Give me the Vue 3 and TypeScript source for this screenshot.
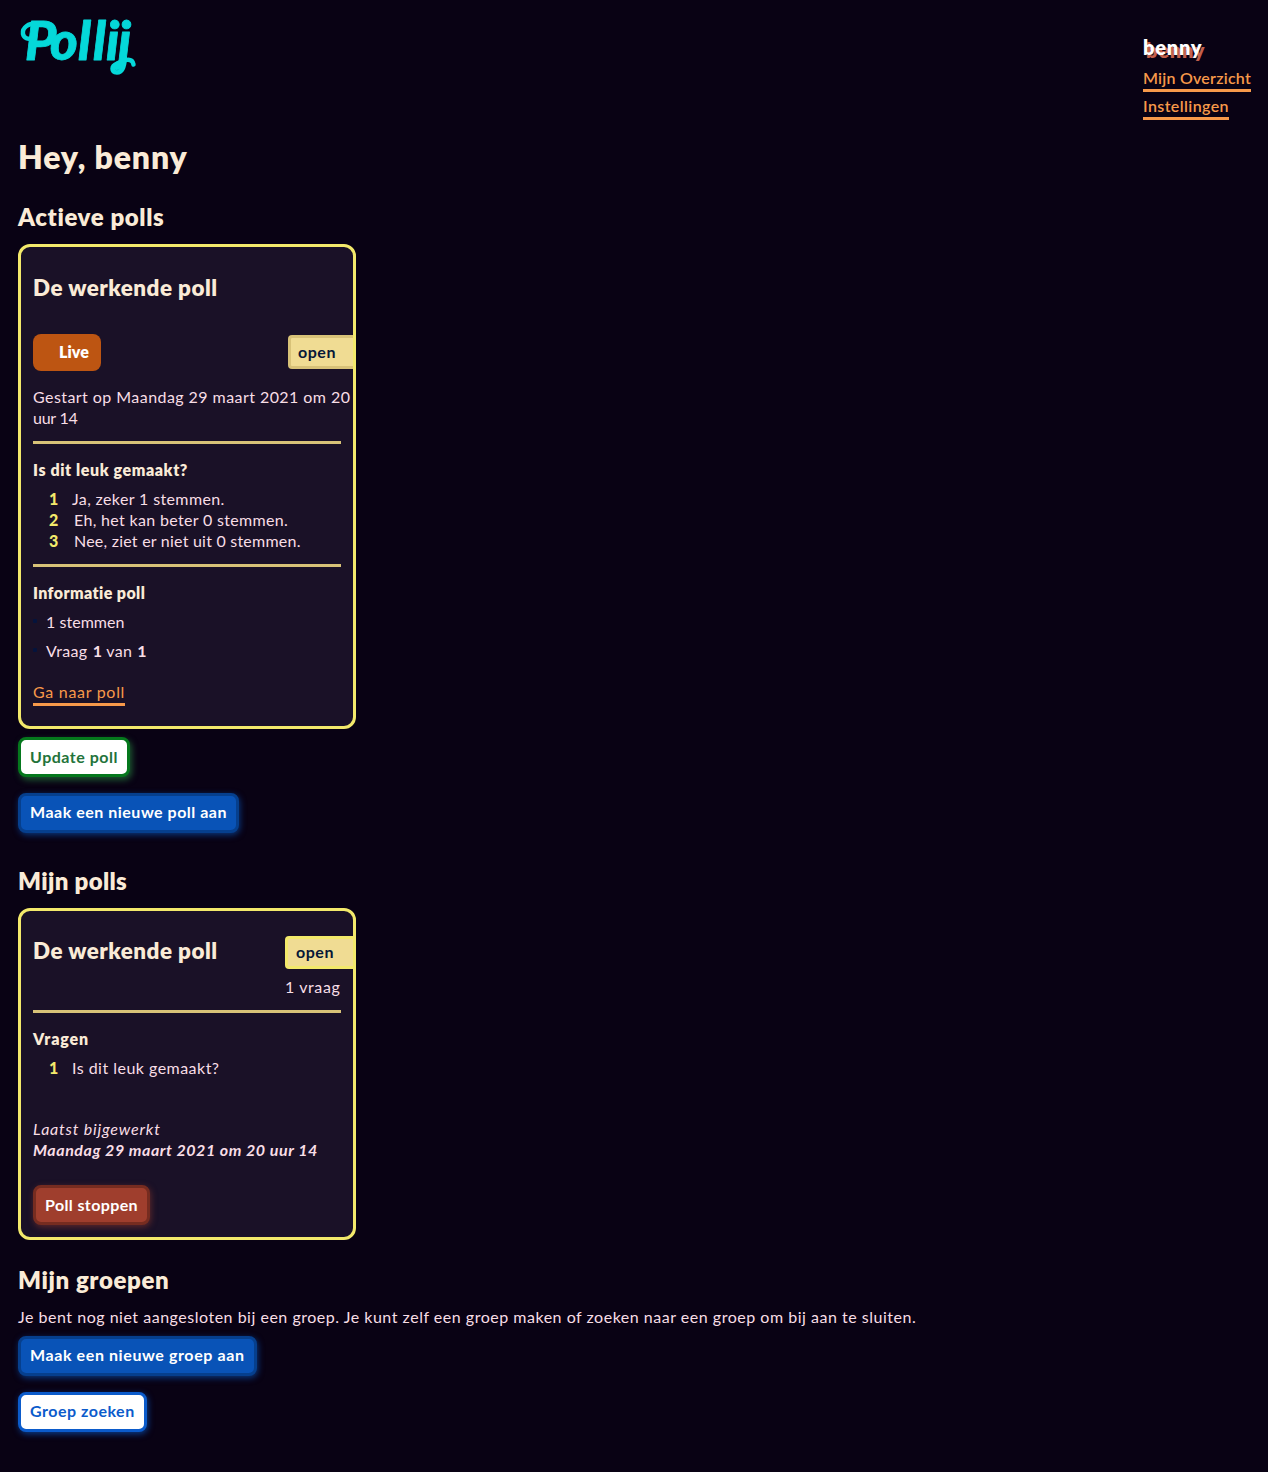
<script setup lang="ts">
interface Answer {
  text: string
  spacing: number
}

const answers: Answer[] = [
  { text: 'Ja, zeker 1 stemmen.', spacing: 0.37 },
  { text: 'Eh, het kan beter 0 stemmen.', spacing: 0.325 },
  { text: 'Nee, ziet er niet uit 0 stemmen.', spacing: 0.226 },
]
</script>

<template>
  <div class="page">
    <header class="top">
      <svg class="logo" width="134" height="90" viewBox="10 0 134 90" role="img" aria-label="Pollij">
        <text class="logo-text" x="25 50 78 93 106 118" y="59.5">Pollij</text>
        <g class="swash">
          <path d="M40 24C28 22 22 28 23 34C24 38 28 40 32 38" />
          <path d="M125 58C124 68 122 72.500 117 72.500C111 72 111 66 117 63.500C124 60 132 57 133.500 64.500" />
        </g>
      </svg>
      <nav class="account">
        <span class="user">benny</span>
        <a class="link overview">Mijn Overzicht</a>
        <a class="link settings">Instellingen</a>
      </nav>
    </header>

    <main>
      <h1>Hey, benny</h1>

      <section>
        <h2>Actieve polls</h2>
        <article class="card active">
          <h3>De werkende poll</h3>
          <div class="status">
            <span class="live">Live</span>
            <span class="tag">open</span>
          </div>
          <p class="started"><span>Gestart op Maandag 29 maart 2021 om 20</span><br /><span class="rest">uur 14</span></p>
          <hr />
          <h4 class="question">Is dit leuk gemaakt?</h4>
          <ol>
            <li v-for="(a, i) in answers" :key="i">
              <b>{{ i + 1 }}</b><span :style="{ letterSpacing: a.spacing + 'px' }">{{ a.text }}</span>
            </li>
          </ol>
          <hr />
          <h4>Informatie poll</h4>
          <ul>
            <li class="votes">1 stemmen</li>
            <li class="progress">Vraag <strong>1</strong> van <strong>1</strong></li>
          </ul>
          <a class="link go">Ga naar poll</a>
        </article>
        <button class="btn update">Update poll</button>
        <button class="btn primary">Maak een nieuwe poll aan</button>
      </section>

      <section class="mine">
        <h2 class="mine-title">Mijn polls</h2>
        <article class="card own">
          <div class="own-head">
            <h3>De werkende poll</h3>
            <div class="own-side">
              <span class="tag bright">open</span>
              <span class="count">1 vraag</span>
            </div>
          </div>
          <hr />
          <h4 class="vragen">Vragen</h4>
          <ol>
            <li><b>1</b><span class="own-question">Is dit leuk gemaakt?</span></li>
          </ol>
          <p class="updated">Laatst bijgewerkt<br /><strong>Maandag 29 maart 2021 om 20 uur 14</strong></p>
          <button class="btn stop">Poll stoppen</button>
        </article>
      </section>

      <section class="groups">
        <h2>Mijn groepen</h2>
        <p class="none">Je bent nog niet aangesloten bij een groep. Je kunt zelf een groep maken of zoeken naar een groep om bij aan te sluiten.</p>
        <button class="btn primary new-group">Maak een nieuwe groep aan</button>
        <button class="btn search">Groep zoeken</button>
      </section>
    </main>
  </div>
</template>

<style>
body {
  margin: 0;
  background: #090214;
}
</style>

<style scoped>
.page {
  box-sizing: border-box;
  height: 1472px;
  padding: 0 17px 0 18px;
  color: #f8dee6;
  background: #090214;
  font: 16px/21px Lato, sans-serif;
  letter-spacing: 0.44px;
}
h1, h2, h3, h4, p, ol, ul {
  margin: 0;
  padding: 0;
  list-style: none;
}
h1, h2, h3, h4 {
  color: #faebd7;
  font-weight: 800;
}
.top {
  display: flex;
  justify-content: space-between;
  align-items: flex-start;
  height: 137px;
}
.logo {
  margin-left: -8px;
}
.logo-text {
  font: italic 900 53px Lato, sans-serif;
  letter-spacing: 0;
  fill: #05d8d9;
  stroke: #05d8d9;
  stroke-width: 0.8;
  stroke-linejoin: round;
}
.swash path {
  fill: none;
  stroke: #05d8d9;
  stroke-width: 4.5;
  stroke-linecap: round;
}
.account {
  display: flex;
  flex-direction: column;
  align-items: flex-start;
  width: 108px;
  padding-top: 34px;
}
.user {
  color: #fff;
  font-size: 20px;
  font-weight: 800;
  line-height: 26px;
  margin-bottom: 7px;
  letter-spacing: 0.75px;
  text-shadow: 3px 3px 0 #c4604c;
}
.link {
  padding-bottom: 1px;
  color: #f7994a;
  border-bottom: 3px solid #f7994a;
}
.account .link {
  margin-bottom: 3px;
  font-weight: 600;
}
.overview { letter-spacing: 0.231px; }
.settings { letter-spacing: 0.403px; }

h1 {
  font-size: 32px;
  line-height: 40px;
  letter-spacing: 0.85px;
}
h2 {
  margin: 25px 0 12px;
  font-size: 24px;
  line-height: 30px;
  letter-spacing: 0.6px;
}
h3 {
  font-size: 22.4px;
  line-height: 30px;
  letter-spacing: 0.48px;
}
h4 {
  margin-bottom: 8px;
  letter-spacing: 0.4px;
}
.card {
  box-sizing: border-box;
  width: 338px;
  padding: 0 12px;
  overflow: hidden;
  background: #1a1127;
  border: 3px solid #f3e96b;
  border-radius: 12px;
}
.active {
  height: 485px;
  padding-top: 26px;
}
.status {
  display: flex;
  justify-content: space-between;
  align-items: flex-start;
  margin: 31px -12px 15px 0;
}
.live {
  box-sizing: border-box;
  width: 68px;
  height: 37px;
  padding-left: 26px;
  line-height: 35px;
  color: #fff;
  background: #bd5512;
  border-radius: 8px;
  font-weight: 800;
  letter-spacing: 0.09px;
}
.tag {
  box-sizing: border-box;
  width: 65px;
  height: 34px;
  margin-top: 1px;
  padding-left: 7px;
  line-height: 27px;
  color: #061737;
  background: #f0dc93;
  border: 3px solid #d8c278;
  border-right: 0;
  border-radius: 4px 0 0 4px;
  font-weight: 700;
  letter-spacing: 0.54px;
}
.started {
  white-space: nowrap;
}
.rest { letter-spacing: -0.25px; }
hr {
  height: 3px;
  margin: 13px 0 15px;
  border: 0;
  background: #d8c278;
}
.question { letter-spacing: 0.585px; }
ol {
  padding-left: 16px;
}
ol b {
  margin-right: 16px;
  color: #f3e96b;
  font-weight: 900;
  letter-spacing: -0.3px;
}
ol li:first-child b {
  display: inline-block;
  width: 7px;
}
ul li {
  margin-bottom: 8px;
  padding-left: 13px;
  background: radial-gradient(circle at 2px 10px, #04133c 2px, transparent 2.5px);
}
.votes { letter-spacing: 0.04px; }
.progress {
  letter-spacing: 0.33px;
  word-spacing: 0.7px;
}
.progress strong { letter-spacing: -0.4px; }
.go {
  display: inline-block;
  margin-top: 12px;
  letter-spacing: 0.7px;
  width: 92px;
  white-space: nowrap;
}
.btn {
  box-sizing: border-box;
  display: block;
  height: 40px;
  padding: 0 0 4px 9px;
  border: 3px solid;
  border-radius: 8px;
  color: #fff;
  font: 700 16px/29px Lato, sans-serif;
  letter-spacing: 0.51px;
  text-align: left;
  white-space: nowrap;
}
.update {
  width: 112px;
  margin-top: 8px;
  padding-bottom: 2px;
  color: #23733a;
  background: #fff;
  border-color: #05781d;
  box-shadow: 2px 3px 6px rgba(35, 115, 58, 0.75);
}
.primary {
  width: 221px;
  margin-top: 16px;
  background: #0953b7;
  border-color: #063f8d;
  box-shadow: 1px 2px 6px rgba(9, 83, 183, 0.65);
}
.mine-title {
  margin-top: 33px;
  letter-spacing: 0.32px;
}
.own {
  height: 332px;
  padding-top: 25px;
}
.own-head {
  display: flex;
  justify-content: space-between;
  margin-right: -12px;
}
.own-side {
  display: flex;
  flex-direction: column;
  width: 68px;
}
.bright {
  width: 68px;
  height: 33px;
  margin-top: 0;
  padding-left: 8px;
  line-height: 25px;
  border-color: #f3e96b;
}
.count {
  margin-top: 7px;
  letter-spacing: 0.6px;
}
.vragen { letter-spacing: 0.85px; }
.own-question { letter-spacing: 0.475px; }
.updated {
  margin-top: 40px;
  font-style: italic;
  letter-spacing: 0.8px;
  white-space: nowrap;
}
.updated strong { letter-spacing: 0.55px; }
.stop {
  width: 117px;
  margin-top: 25px;
  padding-bottom: 2px;
  background: #9f3e2d;
  border-color: #762c20;
  box-shadow: 1px 2px 6px rgba(159, 62, 45, 0.5);
  letter-spacing: 0.38px;
}
.groups h2 {
  margin: 25px 0 11px;
}
.none { letter-spacing: 0.515px; }
.new-group {
  width: 239px;
  margin-top: 9px;
  letter-spacing: 0.6px;
}
.search {
  width: 129px;
  margin-top: 16px;
  color: #0b5bcb;
  background: #fff;
  border-color: #0b5bcb;
  box-shadow: 1px 2px 6px rgba(11, 91, 203, 0.65);
}
</style>
